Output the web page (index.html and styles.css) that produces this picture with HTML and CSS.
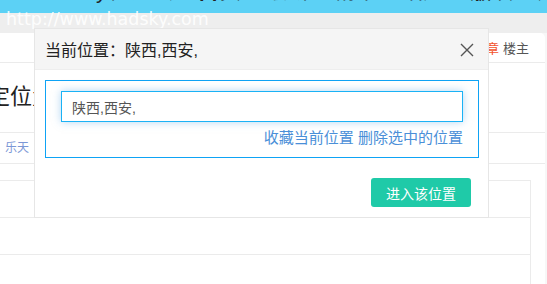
FILE: index.html
```html
<!DOCTYPE html>
<html lang="zh-CN">
<head>
    <meta charset="UTF-8">
    <title>HadSky - 设置定位</title>
    <link rel="stylesheet" href="styles.css">
</head>
<body>

<div class="topbar">
    <div class="topbar-text">HadSky轻论坛 <b>首页</b> 最新 精华 话题 <b>版块</b> 用户中心 消息 <span class="hot">签到</span> <span class="hot">发帖</span></div>
</div>
<div class="urlbar"></div>
<span class="watermark">http://www.hadsky.com</span>

<div class="card">
    <div class="row row-head">
        <span class="tag">章</span>
        <span class="role">楼主</span>
    </div>
    <div class="row row-title">
        <h1>定位置</h1>
    </div>
    <div class="row row-user">
        <span class="user">乐天</span>
    </div>
    <div class="list">
        <div class="list-row"></div>
        <div class="list-row"></div>
        <div class="list-row"></div>
    </div>
</div>

<div class="modal">
    <div class="modal-head">
        <span class="modal-title">当前位置：陕西,西安,</span>
        <span class="close">
            <svg width="14" height="14" viewBox="0 0 14 14">
                <path d="M1 1 L13 13 M13 1 L1 13" stroke="#555" stroke-width="1.4" fill="none"/>
            </svg>
        </span>
    </div>
    <div class="modal-body">
        <div class="pick-box">
            <input type="text" class="pick-input" value="陕西,西安,">
            <div class="pick-links">
                <a href="#">收藏当前位置</a> <a href="#">删除选中的位置</a>
            </div>
        </div>
    </div>
    <div class="modal-foot">
        <button class="btn-go">进入该位置</button>
    </div>
</div>

</body>
</html>
```

FILE: styles.css
```css
body {
    margin: 0;
    font-family: "Liberation Sans", "Noto Sans CJK SC", sans-serif;
    background-color: #f7f7f7;
    color: #333;
}

.topbar {
    height: 13px;
    background-color: #5cd1f5;
    overflow: hidden;
}

.topbar-text {
    margin-top: -21px;
    padding-left: 30px;
    font-size: 22px;
    line-height: 24px;
    color: #222;
    white-space: nowrap;
    word-spacing: 18px;
}

.topbar-text .hot {
    color: #e41b1b;
}

.urlbar {
    height: 20px;
    background-color: #eeeeee;
}

.watermark {
    position: absolute;
    left: 6px;
    top: 6px;
    font-family: "DejaVu Sans", sans-serif;
    font-size: 17.5px;
    line-height: 26px;
    color: rgba(255, 255, 255, 0.9);
}

.card {
    background: white;
    margin-right: 2px;
    border-top-right-radius: 5px;
    height: 251px;
}

.row {
    border-bottom: 1px solid #ebebeb;
    box-sizing: border-box;
}

.row-head {
    height: 30px;
    display: flex;
    align-items: center;
    justify-content: flex-end;
    padding-right: 16px;
    font-size: 13px;
    gap: 4px;
}

.tag {
    color: #f2542d;
}

.role {
    color: #555;
}

.row-title {
    height: 70px;
    padding-top: 19px;
}

h1 {
    margin: 0 0 0 -12px;
    font-size: 22px;
    font-weight: normal;
    line-height: 30px;
    color: #222;
}

.row-user {
    height: 31px;
    padding-left: 5px;
    font-size: 12px;
    line-height: 30px;
}

.user {
    color: #7b97d6;
}

.list {
    margin-top: 16px;
    margin-right: 14px;
    border-right: 1px solid #ebebeb;
    border-top: 1px solid #ebebeb;
}

.list-row {
    height: 36px;
    border-bottom: 1px solid #ebebeb;
}

.modal {
    position: absolute;
    left: 34px;
    top: 28px;
    width: 453px;
    height: 188px;
    background: white;
    border: 1px solid #e6e6e6;
}

.modal-head {
    height: 40px;
    background-color: #f5f5f5;
    border-bottom: 1px solid #eeeeee;
    display: flex;
    align-items: center;
    justify-content: space-between;
    padding: 0 14px 0 10px;
}

.modal-title {
    font-size: 16px;
    color: #222;
}

.close {
    display: flex;
    padding-top: 1px;
}

.modal-body {
    padding: 10px 9px 0 10px;
}

.pick-box {
    border: 1px solid #0ea3f5;
    padding: 10px 15px 9px 15px;
}

.pick-input {
    display: block;
    width: 100%;
    height: 31px;
    box-sizing: border-box;
    border: 1px solid #1ab2f5;
    box-shadow: 0 0 8px rgba(102, 175, 233, 0.5);
    padding: 0 10px;
    font-family: "Liberation Sans", "Noto Sans CJK SC", sans-serif;
    font-size: 14px;
    color: #555;
    outline: none;
}

.pick-links {
    text-align: right;
    font-size: 15px;
    line-height: 20px;
    margin-top: 6px;
}

.pick-links a {
    color: #4a8fd8;
    text-decoration: none;
}

.modal-foot {
    display: flex;
    justify-content: flex-end;
    padding: 20px 17px 0 0;
}

.btn-go {
    width: 100px;
    height: 29px;
    background-color: #1fcaa8;
    color: white;
    border: none;
    border-radius: 3px;
    font-family: "Liberation Sans", "Noto Sans CJK SC", sans-serif;
    font-size: 14px;
    cursor: pointer;
}

.btn-go:hover {
    background-color: #1ab897;
}
```
